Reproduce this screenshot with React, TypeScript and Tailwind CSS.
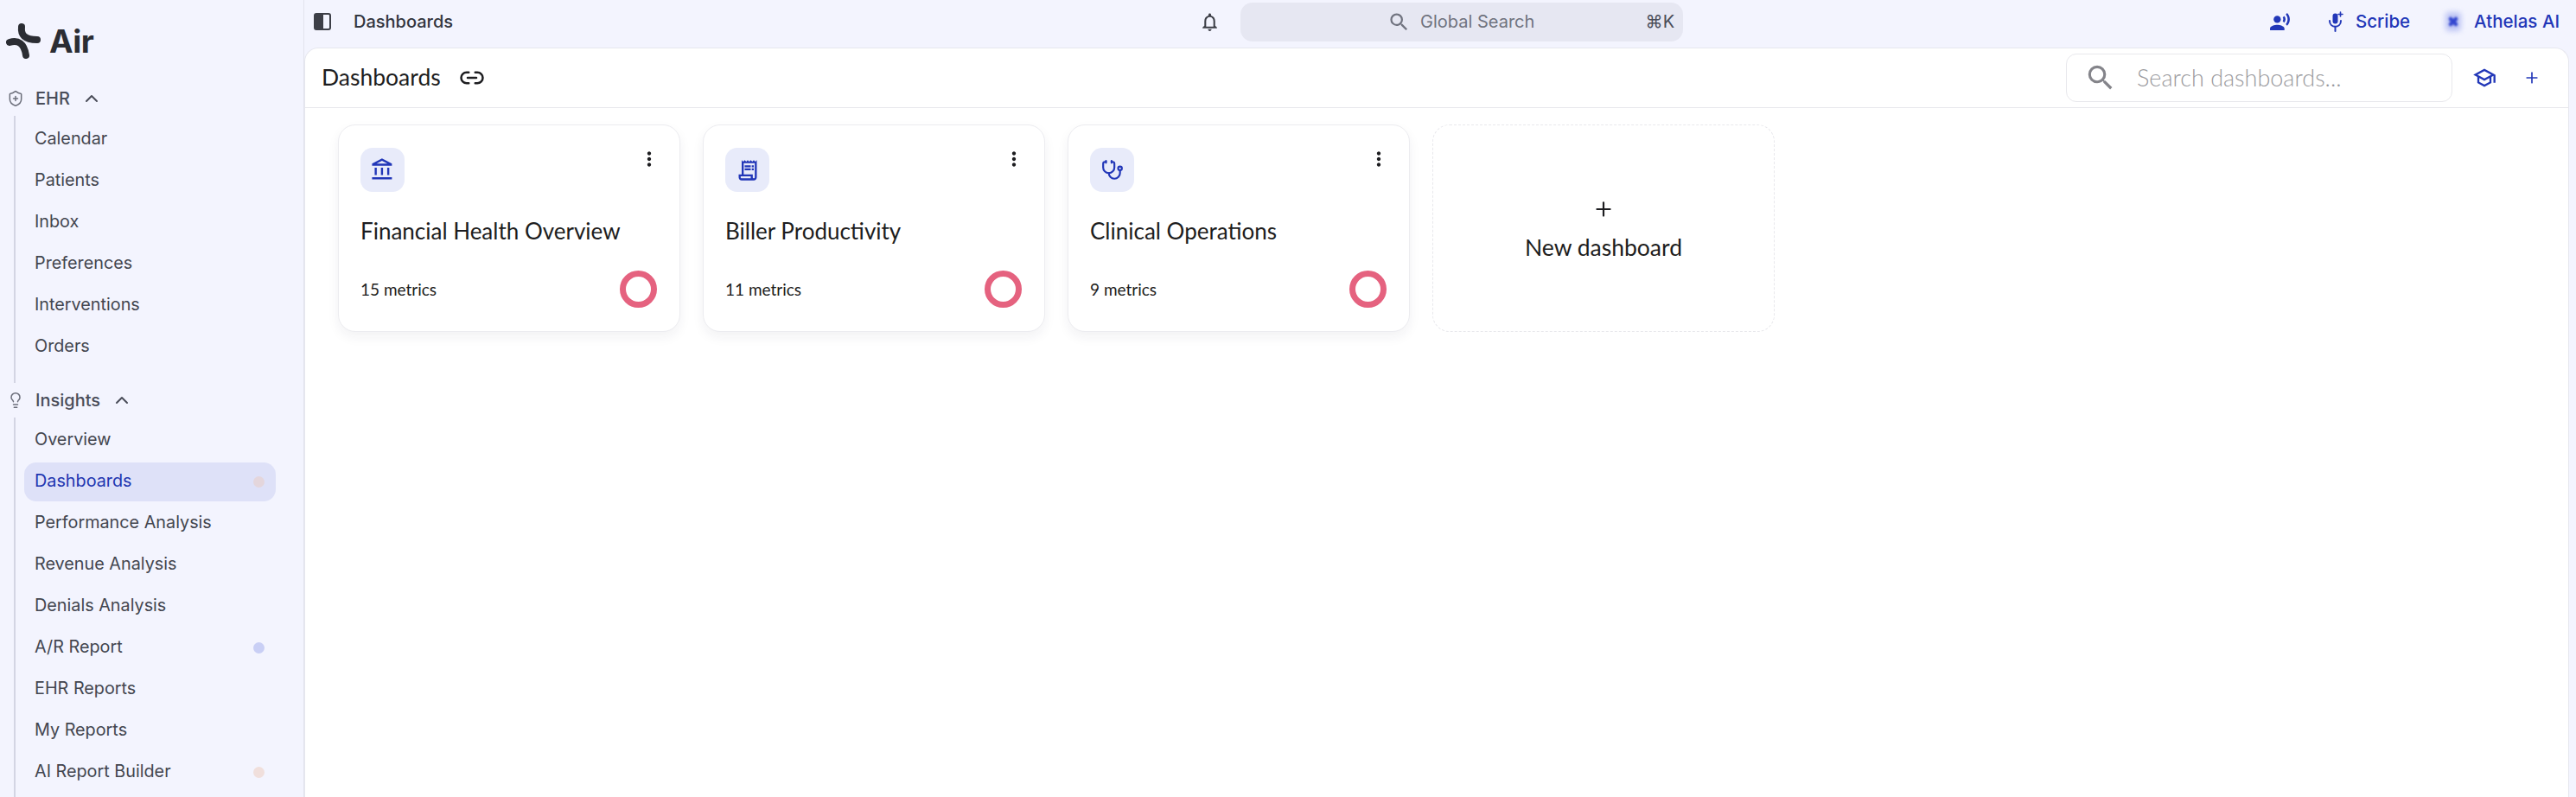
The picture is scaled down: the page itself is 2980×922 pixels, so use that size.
import { ChevronUp, Lightbulb, Link2, Plus, ShieldPlus, Stethoscope } from 'lucide-react';
import {
  MdMoreVert,
  MdOutlineAccountBalance,
  MdOutlineNotifications,
  MdOutlineReceiptLong,
  MdOutlineSchool,
  MdRecordVoiceOver,
  MdSearch,
} from 'react-icons/md';
import type { ReactNode } from 'react';

const ehrItems = ['Calendar', 'Patients', 'Inbox', 'Preferences', 'Interventions', 'Orders'];

const insightItems = [
  { label: 'Overview' },
  { label: 'Dashboards', active: true, dot: 'bg-[#e4d6dc]' },
  { label: 'Performance Analysis' },
  { label: 'Revenue Analysis' },
  { label: 'Denials Analysis' },
  { label: 'A/R Report', dot: 'bg-[#c9cff5]' },
  { label: 'EHR Reports' },
  { label: 'My Reports' },
  { label: 'AI Report Builder', dot: 'bg-[#f0dfdc]' },
];

const cards = [
  { title: 'Financial Health Overview', metrics: '15 metrics', icon: <MdOutlineAccountBalance className="h-[29px] w-[29px]" /> },
  { title: 'Biller Productivity', metrics: '11 metrics', icon: <MdOutlineReceiptLong className="h-[28px] w-[28px]" /> },
  { title: 'Clinical Operations', metrics: '9 metrics', icon: <Stethoscope className="h-[26px] w-[26px]" strokeWidth={2} /> },
];

const Logo = () => (
  <div className="flex h-[94px] shrink-0 items-center pl-[7px] pt-[1px]">
    <svg width="41" height="43" viewBox="0 0 41 43" fill="none" stroke="#2b2d33" strokeWidth="8" strokeLinecap="round">
      <path d="M18 5 C17 14 21 20 36 20" />
      <path d="M4 23 C14 20 21 24 23 38" />
    </svg>
    <span className="ml-[9px] font-['Inter',sans-serif] text-[37px] font-bold leading-none tracking-[-0.5px] text-[#2b2d33]">Air</span>
  </div>
);

const SectionHead = ({ icon, label }: { icon: ReactNode; label: string }) => (
  <div className="flex h-[40px] shrink-0 items-center pl-[8px] text-[20px] font-medium text-[#4a4d59]">
    <span className="flex w-[33px] shrink-0 text-[#6b6e7a]">{icon}</span>
    <span>{label}</span>
    <ChevronUp className="ml-[13px] h-[24px] w-[24px]" strokeWidth={2} />
  </div>
);

const Sidebar = () => (
  <aside className="flex h-full w-[352px] shrink-0 flex-col overflow-hidden border-r border-[#e3e4ee] font-['Inter',sans-serif]">
    <Logo />
    <SectionHead icon={<ShieldPlus className="h-[20px] w-[20px]" strokeWidth={1.8} />} label="EHR" />
    <ul className="ml-[16px] shrink-0 border-l-[2px] border-[#d3d5e3] pb-[18px] pt-[3px]">
      {ehrItems.map((item) => (
        <li key={item} className="flex h-[48px] items-center pl-[22px] text-[19.8px] text-[#43464f]">
          {item}
        </li>
      ))}
    </ul>
    <SectionHead icon={<Lightbulb className="h-[20px] w-[20px]" strokeWidth={1.8} />} label="Insights" />
    <ul className="ml-[16px] flex-1 shrink-0 border-l-[2px] border-[#d3d5e3] pt-[2px]">
      {insightItems.map((item) => (
        <li key={item.label} className="flex h-[48px] items-center">
          <div
            className={`ml-[10px] flex h-[45px] w-[291px] items-center justify-between rounded-[14px] pl-[12px] pr-[13px] text-[19.8px] ${
              item.active ? 'bg-[#dee1f8] text-[#2236b0]' : 'text-[#43464f]'
            }`}
          >
            <span>{item.label}</span>
            {item.dot && <span className={`h-[13px] w-[13px] rounded-full ${item.dot}`} />}
          </div>
        </li>
      ))}
    </ul>
  </aside>
);

const ScribeMic = () => (
  <svg width="20" height="24" viewBox="0 0 20 24" fill="none" stroke="#2237b8" strokeWidth="2" strokeLinecap="round">
    <rect x="6.5" y="2.5" width="6" height="12" rx="3" fill="#2237b8" stroke="none" />
    <path d="M3 11 C3 20 16 20 16 11" />
    <path d="M9.5 18 V23" />
    <path d="M15.5 1 V6 M13 3.5 H18" strokeWidth="1.6" />
  </svg>
);

const AthelasMark = () => (
  <div className="relative h-[24px] w-[20px] shrink-0">
    <div className="absolute inset-[1px] rounded-[4px] bg-[#a6b0f0] opacity-70 blur-[3px]" />
    <svg className="absolute inset-0 blur-[0.8px]" width="20" height="24" viewBox="0 0 20 24" stroke="#3346cf" strokeWidth="4.5" strokeLinecap="round">
      <path d="M7 9 L13 15 M13 9 L7 15" />
    </svg>
  </div>
);

const TopBar = () => (
  <header className="flex h-[55px] shrink-0 items-center pb-[5px] font-['Inter',sans-serif]">
    <svg className="ml-[11px]" width="20" height="20" viewBox="0 0 20 20">
      <rect x="1" y="1" width="18" height="18" rx="2" fill="none" stroke="#3d3f47" strokeWidth="2" />
      <rect x="1" y="1" width="10" height="18" rx="1" fill="#3d3f47" />
    </svg>
    <span className="ml-[26px] text-[20px] font-medium text-[#33363f]">Dashboards</span>
    <MdOutlineNotifications className="ml-[863px] h-[25px] w-[25px] text-[#3d3f47]" />
    <div className="ml-[23px] flex h-[45px] w-[512px] items-center rounded-[14px] bg-[#e6e7f2] pl-[170px] pr-[10px]">
      <MdSearch className="h-[27px] w-[27px] text-[#70737f]" />
      <span className="ml-[11px] text-[20px] text-[#70737f]">Global Search</span>
      <span className="ml-auto text-[20px] text-[#4a4d59]">⌘K</span>
    </div>
    <div className="ml-auto flex items-center pr-[11px] text-[20.5px] font-medium text-[#2237b8]">
      <MdRecordVoiceOver className="h-[25px] w-[25px]" />
      <span className="ml-[42px] flex items-center">
        <ScribeMic />
      </span>
      <span className="ml-[13px]">Scribe</span>
      <span className="ml-[40px]">
        <AthelasMark />
      </span>
      <span className="ml-[14px]">Athelas AI</span>
    </div>
  </header>
);

const DashboardCard = ({ title, metrics, icon }: { title: string; metrics: string; icon: ReactNode }) => (
  <div className="flex h-[240px] w-[396px] flex-col rounded-[20px] border border-[#ececf0] bg-white pb-[25px] pl-[25px] pr-[26px] pt-[26px] shadow-[0_6px_14px_rgba(30,30,60,0.06)]">
    <div className="flex items-start justify-between">
      <div className="flex h-[51px] w-[51px] items-center justify-center rounded-[14px] bg-[#e8ebfa] text-[#2237b8]">{icon}</div>
      <MdMoreVert className="-mr-[4px] h-[26px] w-[26px] text-[#1d1d20]" />
    </div>
    <h2 className="mt-[28px] text-[26px] font-normal leading-[34px] text-[#1d1d20]">{title}</h2>
    <div className="mt-auto flex items-center justify-between">
      <span className="text-[19px] text-[#1d1d20]">{metrics}</span>
      <span className="mb-[2px] h-[43px] w-[43px] rounded-full border-[7px] border-[#e5627f]" />
    </div>
  </div>
);

const NewDashboardCard = () => (
  <div className="flex h-[240px] w-[396px] flex-col items-center justify-center rounded-[20px] border border-dashed border-[#e8e8ec] bg-white pt-[4px] text-[#1d1d20]">
    <Plus className="h-[26px] w-[26px]" strokeWidth={2} />
    <span className="mt-[14px] text-[26.5px] leading-[34px]">New dashboard</span>
  </div>
);

const App = () => (
  <div className="flex h-[922px] w-full overflow-hidden bg-[#f3f4fe]">
    <Sidebar />
    <div className="flex min-w-0 flex-1 flex-col pr-[8px]">
      <TopBar />
      <main className="flex-1 rounded-t-[16px] border border-b-0 border-[#e6e7ee] bg-white font-['Lato',sans-serif]">
        <div className="flex h-[69px] items-center border-b border-[#e8e8ec] pl-[19px] pr-[32px]">
          <h1 className="text-[26.5px] font-normal text-[#1d1d20]">Dashboards</h1>
          <Link2 className="ml-[21px] h-[30px] w-[30px] text-[#1d1d20]" strokeWidth={2} />
          <div className="ml-auto flex h-[56px] w-[447px] items-center rounded-[12px] border border-[#e8e8ec] pl-[20px]">
            <MdSearch className="h-[38px] w-[38px] text-[#84848a]" />
            <span className="ml-[23px] text-[27px] font-light text-[#9a9a9e]">Search dashboards...</span>
          </div>
          <MdOutlineSchool className="ml-[23px] h-[28px] w-[28px] text-[#2237b8]" />
          <Plus className="ml-[31px] h-[20px] w-[20px] text-[#2237b8]" strokeWidth={2} />
        </div>
        <div className="flex gap-[26px] pl-[38px] pt-[19px]">
          {cards.map((card) => (
            <DashboardCard key={card.title} {...card} />
          ))}
          <NewDashboardCard />
        </div>
      </main>
    </div>
  </div>
);

export default App;
